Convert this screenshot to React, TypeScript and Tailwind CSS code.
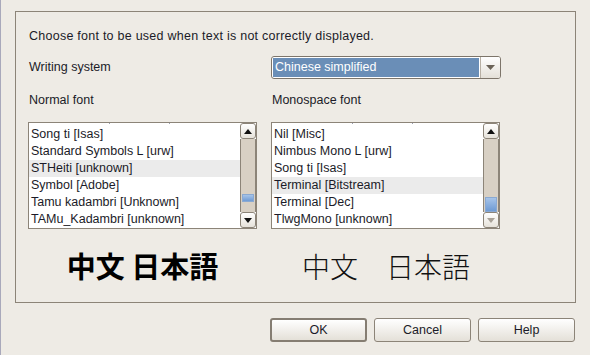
import React from 'react';

const UI_FONT = "font-['Liberation_Sans',Arial,sans-serif]";

const Arrow: React.FC<{ up?: boolean; disabled?: boolean }> = ({ up, disabled }) => (
  <svg width="8" height="5" viewBox="0 0 8 5">
    <path d={up ? 'M0 5 L4 0 L8 5 Z' : 'M0 0 L8 0 L4 5 Z'} fill={disabled ? '#a9a298' : '#111'} />
  </svg>
);

const ScrollButton: React.FC<{ up?: boolean; disabled?: boolean }> = ({ up, disabled }) => (
  <div className="h-[16px] flex items-center justify-center rounded-[3px] border border-[#8c8478] bg-gradient-to-b from-white to-[#e6e2da]">
    <Arrow up={up} disabled={disabled} />
  </div>
);

interface ListProps {
  items: string[];
  selected: number;
  thumbHeight: number;
  thumbBottom: number;
  downDisabled?: boolean;
}

const FontList: React.FC<ListProps> = ({ items, selected, thumbHeight, thumbBottom, downDisabled }) => (
  <div className="h-[107px] flex border border-[#8c8478] bg-white">
    <div className="flex-1 overflow-hidden">
      {/* tail of the row scrolled above */}
      <div className="h-[3px] relative">
        <span className="absolute top-0 left-[80px] w-[1px] h-[1px] bg-[#9aa0b0]" />
        <span className="absolute top-0 left-[140px] w-[1px] h-[1px] bg-[#9aa0b0]" />
      </div>
      {items.map((it, i) => (
        <div
          key={i}
          className={`h-[17px] leading-[17px] pl-[2px] text-[12.5px] text-[#1b1b28] whitespace-nowrap ${
            i === selected ? 'bg-[#ebebeb]' : ''
          }`}
        >
          {it}
        </div>
      ))}
    </div>
    <div className="w-[16px] flex flex-col">
      <ScrollButton up />
      <div
        className="flex-1 flex flex-col justify-end bg-[#d8d0c4] border-x border-[#8c8478]"
        style={{ paddingBottom: thumbBottom }}
      >
        <div
          className="mx-[1px] bg-gradient-to-b from-[#a7c4e8] to-[#6f9bd4] border border-[#8aa9d2]"
          style={{ height: thumbHeight }}
        />
      </div>
      <ScrollButton disabled={downDisabled} />
    </div>
  </div>
);

const Button: React.FC<{ label: string; isDefault?: boolean }> = ({ label, isDefault }) => (
  <button
    className={`w-[97px] h-[24px] rounded-[3px] bg-gradient-to-b from-white to-[#e4e0d8] text-[12.5px] text-[#1b1b28] ${
      isDefault ? 'border-2 border-[#857d72]' : 'border border-[#8c8478]'
    }`}
  >
    {label}
  </button>
);

export default function App() {
  const normal = [
    'Song ti [Isas]',
    'Standard Symbols L [urw]',
    'STHeiti [unknown]',
    'Symbol [Adobe]',
    'Tamu kadambri [Unknown]',
    'TAMu_Kadambri [unknown]',
  ];
  const mono = [
    'Nil [Misc]',
    'Nimbus Mono L [urw]',
    'Song ti [Isas]',
    'Terminal [Bitstream]',
    'Terminal [Dec]',
    'TlwgMono [unknown]',
  ];

  return (
    <div className={`w-[590px] h-[355px] bg-[#eeebe5] border-l border-[#a9a9bb] overflow-hidden ${UI_FONT}`}>
      <div className="ml-[14px] mt-[11px] w-[561px] h-[292px] border border-[#8c8478] pt-[16px] pl-[12px]">
        <div className="pl-[1px] h-[16px] leading-[16px] text-[12.5px] tracking-[0.25px] text-[#1b1b28]">
          Choose font to be used when text is not correctly displayed.
        </div>

        <div className="mt-[12px] grid grid-cols-[229px_230px] gap-x-[14px]">
          <div className="h-[23px] flex items-center pl-[1px] text-[12.5px] text-[#1b1b28]">Writing system</div>
          <div className="h-[23px] flex rounded-[3px] border border-[#7d756a] bg-white overflow-hidden">
            <div className="flex-1 m-[1px] bg-[#6a8eb7] text-white text-[12.5px] leading-[19px] pl-[2px]">
              Chinese simplified
            </div>
            <div className="w-[20px] flex items-center justify-center border-l border-[#b8b0a4] bg-gradient-to-b from-white to-[#e4e0d8]">
              <svg width="9" height="5" viewBox="0 0 9 5">
                <path d="M0 0 L9 0 L4.5 5 Z" fill="#6b6358" />
              </svg>
            </div>
          </div>

          <div className="mt-[13px] h-[16px] leading-[16px] pl-[1px] text-[12.5px] text-[#1b1b28]">Normal font</div>
          <div className="mt-[13px] h-[16px] leading-[16px] pl-[1px] text-[12.5px] text-[#1b1b28]">Monospace font</div>

          <div className="mt-[14px] w-[229px]">
            <FontList items={normal} selected={2} thumbHeight={8} thumbBottom={10} />
          </div>
          <div className="mt-[14px] w-[229px]">
            <FontList items={mono} selected={3} thumbHeight={15} thumbBottom={0} downDisabled />
          </div>

          <div className="mt-[19px] h-[36px] flex items-center justify-center font-['Noto_Sans_CJK_JP',sans-serif] font-bold text-[29px] text-black">
            中文 日本語
          </div>
          <div className="mt-[19px] h-[36px] flex items-center justify-center font-['Noto_Sans_CJK_JP',sans-serif] font-light text-[28px] text-[#111] whitespace-pre">
            中文　日本語
          </div>
        </div>
      </div>

      <div className="mt-[15px] flex justify-end gap-[7px] pr-[15px]">
        <Button label="OK" isDefault />
        <Button label="Cancel" />
        <Button label="Help" />
      </div>
    </div>
  );
}
